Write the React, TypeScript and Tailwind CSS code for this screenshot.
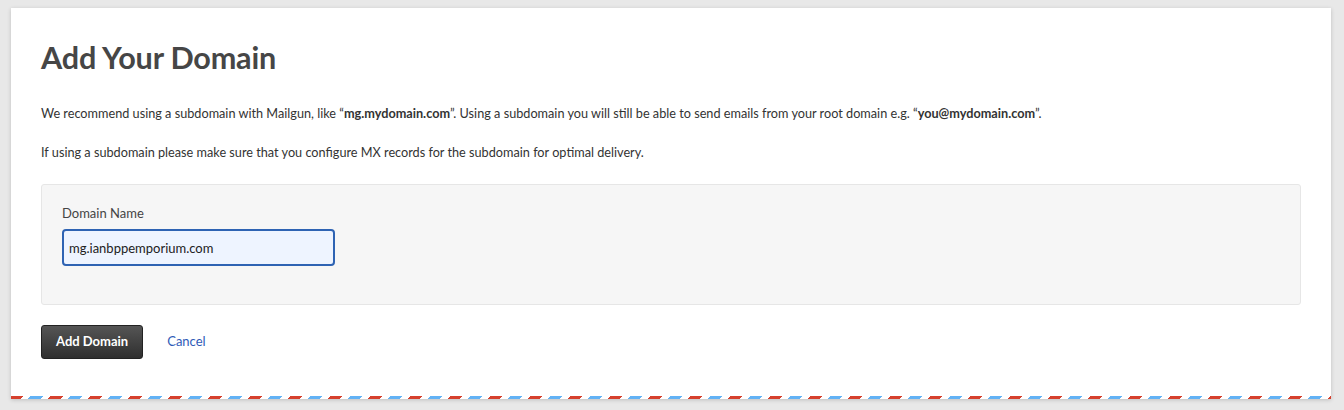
import React from 'react';

const App = () => {
    return (
        <div className="min-h-screen bg-[#e8e8e8] pt-[8px] pl-[11px] pr-[13px] pb-[11px] font-['Lato',sans-serif]">
            <div className="bg-white shadow-[0_1px_4px_rgba(0,0,0,0.18)] flex flex-col h-[391px]">
                <div className="px-[30px] pt-[32px] flex-1">
                    {/* --- Heading --- */}
                    <h1 className="text-[30.6px] leading-[36px] font-bold text-[#464646] tracking-[-0.2px]">Add Your Domain</h1>

                    {/* --- Intro copy --- */}
                    <p className="mt-[27px] text-[12.7px] leading-[20px] text-[#333]">
                        We recommend using a subdomain with Mailgun, like “<b>mg.mydomain.com</b>”. Using a subdomain you will still be able to send emails from your root domain e.g. “<b>you@mydomain.com</b>”.
                    </p>
                    <p className="mt-[19px] text-[12.7px] leading-[20px] text-[#333]">
                        If using a subdomain please make sure that you configure MX records for the subdomain for optimal delivery.
                    </p>

                    {/* --- Form panel --- */}
                    <div className="mt-[22px] h-[121px] bg-[#f6f6f6] border border-[#e6e6e6] rounded-[3px] px-[20px] pt-[19px]">
                        <label className="block text-[13px] leading-[18px] text-[#444]">Domain Name</label>
                        <input
                            defaultValue="mg.ianbppemporium.com"
                            className="mt-[7px] w-[273px] h-[37px] px-[5px] bg-[#eef4ff] border-2 border-[#2e63b3] rounded-[4px] text-[13px] text-[#222] outline-none"
                        />
                    </div>

                    {/* --- Actions --- */}
                    <div className="mt-[20px] flex items-center gap-[24px]">
                        <button className="h-[34px] px-[14px] rounded-[3px] border border-[#222] bg-[linear-gradient(#555,#2f2f2f)] text-white text-[13px] font-bold">
                            Add Domain
                        </button>
                        <a href="#" className="text-[13px] text-[#2f5bb7]">Cancel</a>
                    </div>
                </div>

                {/* --- Airmail edge --- */}
                <div className="h-[3px] bg-[repeating-linear-gradient(135deg,#d6402d_0_8.49px,transparent_8.49px_14.14px,#62b2f5_14.14px_22.63px,transparent_22.63px_28.28px)]" />
            </div>
        </div>
    );
};

export default App;
